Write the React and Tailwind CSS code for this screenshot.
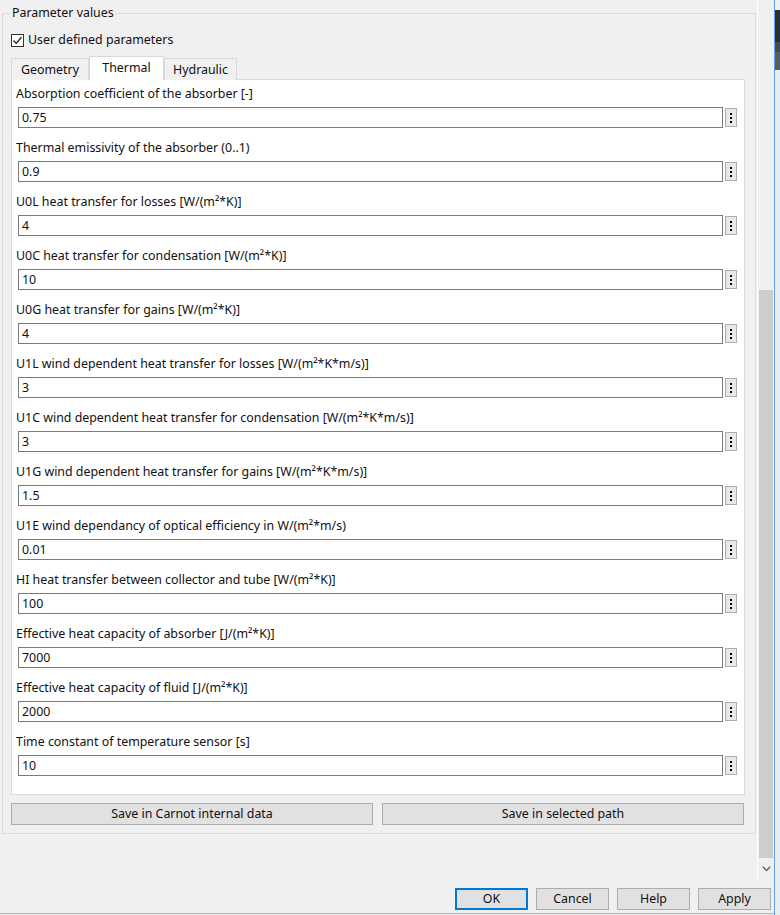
import React from 'react'

const rows = [
  ['Absorption coefficient of the absorber [-]', '0.75'],
  ['Thermal emissivity of the absorber (0..1)', '0.9'],
  ['U0L heat transfer for losses [W/(m²*K)]', '4'],
  ['U0C heat transfer for condensation [W/(m²*K)]', '10'],
  ['U0G heat transfer for gains [W/(m²*K)]', '4'],
  ['U1L wind dependent heat transfer for losses [W/(m²*K*m/s)]', '3'],
  ['U1C wind dependent heat transfer for condensation [W/(m²*K*m/s)]', '3'],
  ['U1G wind dependent heat transfer for gains [W/(m²*K*m/s)]', '1.5'],
  ['U1E wind dependancy of optical efficiency in W/(m²*m/s)', '0.01'],
  ['HI heat transfer between collector and tube [W/(m²*K)]', '100'],
  ['Effective heat capacity of absorber [J/(m²*K)]', '7000'],
  ['Effective heat capacity of fluid [J/(m²*K)]', '2000'],
  ['Time constant of temperature sensor [s]', '10'],
]

const DotsButton = () => (
  <div className="w-[12px] h-[19px] mt-[1px] border border-[#adadad] bg-[#e8e8e8] flex flex-col items-center justify-center gap-[2px]">
    <span className="w-[2px] h-[2px] bg-black" />
    <span className="w-[2px] h-[2px] bg-black" />
    <span className="w-[2px] h-[2px] bg-black" />
  </div>
)

const ParamRow = ({ label, value }) => (
  <div className="flex flex-col">
    <div className="leading-[16px] h-[16px] whitespace-nowrap">{label}</div>
    <div className="flex gap-[2px] mt-[5px] ml-[2px]">
      <div className="w-[705px] h-[21px] border border-[#7a7a7a] bg-white flex items-center pl-[3px] leading-[16px]">
        {value}
      </div>
      <DotsButton />
    </div>
  </div>
)

const DialogButton = ({ children, primary }) => (
  <button
    className={
      primary
        ? 'w-[73px] h-[22px] border-2 border-[#0078d7] bg-[#e1e1e1] leading-[16px]'
        : 'w-[73px] h-[22px] border border-[#adadad] bg-[#e1e1e1] leading-[16px]'
    }
  >
    {children}
  </button>
)

export default function App() {
  return (
    <div
      className="w-[780px] h-[915px] bg-[#f0f0f0] flex overflow-hidden text-[12.4px] text-[#111]"
      style={{ fontFamily: '"Noto Sans", "Open Sans", sans-serif' }}
    >
      {/* Dialog body */}
      <div className="w-[774px] flex flex-col">
        <div className="flex h-[880px]">
          {/* Scroll content */}
          <div className="w-[757px] pt-[13px] pl-[2px]">
            <div className="relative w-[754px] border border-[#dcdcdc] pt-[18px] pl-[8px] pb-[8px]">
              <div className="absolute -top-[9px] left-[7px] px-[2px] bg-[#f0f0f0] leading-[16px]">
                Parameter values
              </div>

              {/* Checkbox */}
              <div className="flex items-center h-[16px] gap-[4px]">
                <div className="w-[13px] h-[13px] border border-[#333] bg-white flex items-center justify-center">
                  <svg width="11" height="11" viewBox="0 0 11 11">
                    <path d="M1.5 5.5 L4.2 8.2 L9.5 2.2" fill="none" stroke="#222" strokeWidth="1.3" />
                  </svg>
                </div>
                <span className="leading-[16px]">User defined parameters</span>
              </div>

              {/* Tabs */}
              <div className="flex items-end h-[24px] mt-[8px] relative z-10">
                <div className="h-[22px] w-[78px] border border-b-0 border-[#d9d9d9] bg-[#f0f0f0] flex items-center justify-center pt-[1px]">
                  Geometry
                </div>
                <div className="h-[24px] w-[75px] border border-b-0 border-[#d9d9d9] bg-white flex items-center justify-center">
                  Thermal
                </div>
                <div className="h-[22px] w-[73px] border border-b-0 border-[#d9d9d9] bg-[#f0f0f0] flex items-center justify-center pt-[1px]">
                  Hydraulic
                </div>
              </div>

              {/* Tab panel */}
              <div className="w-[734px] -mt-[1px] border border-[#d9d9d9] bg-white pt-[6px] pl-[4px] pb-[18px] flex flex-col gap-[12px]">
                {rows.map(([label, value]) => (
                  <ParamRow key={label} label={label} value={value} />
                ))}
              </div>

              {/* Save buttons */}
              <div className="flex gap-[9px] mt-[8px]">
                <button className="w-[362px] h-[22px] border border-[#adadad] bg-[#e1e1e1] leading-[16px]">
                  Save in Carnot internal data
                </button>
                <button className="w-[362px] h-[22px] border border-[#adadad] bg-[#e1e1e1] leading-[16px]">
                  Save in selected path
                </button>
              </div>
            </div>
          </div>

          {/* Scrollbar */}
          <div className="w-[17px] flex flex-col bg-[#f0f0f0] border-l border-white">
            <div className="h-[290px]" />
            <div className="h-[568px] mx-[1px] bg-[#cdcdcd]" />
            <div className="flex-1 flex items-center justify-center">
              <svg width="9" height="6" viewBox="0 0 9 6">
                <path d="M0.8 0.8 L4.5 4.5 L8.2 0.8" fill="none" stroke="#606060" strokeWidth="1.4" />
              </svg>
            </div>
          </div>
        </div>

        {/* Dialog buttons */}
        <div className="h-[33px] flex justify-end items-start gap-[8px] pt-[8px] pr-[3px]">
          <DialogButton primary>OK</DialogButton>
          <DialogButton>Cancel</DialogButton>
          <DialogButton>Help</DialogButton>
          <DialogButton>Apply</DialogButton>
        </div>
        <div className="h-[1px] bg-[#8fbcee]" />
        <div className="flex-1 bg-[#e8e8e8]" />
      </div>

      {/* Window edge */}
      <div className="w-[1px] bg-[#5ea2ee]" />
      <div className="w-[5px] flex flex-col">
        <div className="h-[10px] bg-[#f0f0f0]" />
        <div className="h-[32px] bg-[#2e2e2e]" />
        <div className="h-[10px] bg-[#4a4a4a]" />
        <div className="h-[18px] bg-[#5c5c5c]" />
        <div className="flex-1 bg-[#ececec]" />
      </div>
    </div>
  )
}
